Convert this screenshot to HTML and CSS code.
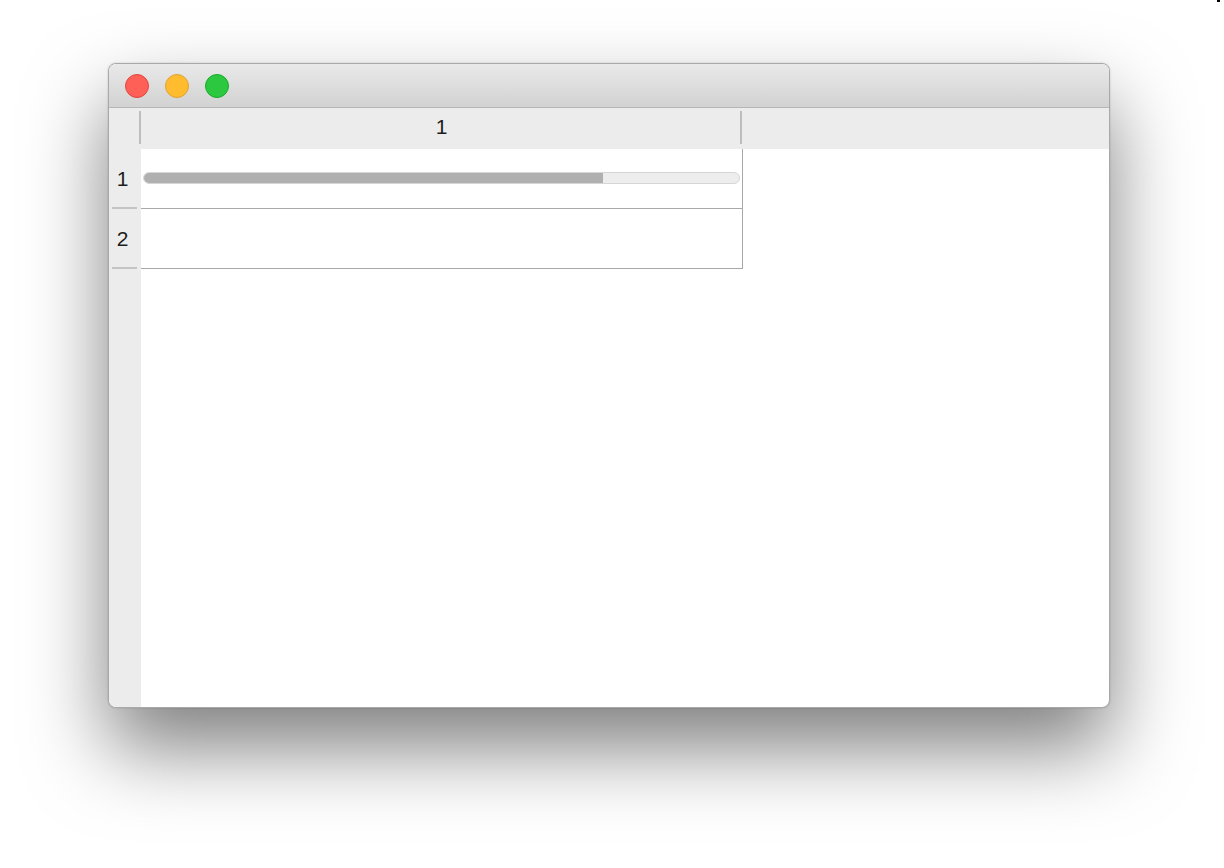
FILE: index.html
```html
<!DOCTYPE html>
<html>
<head>
<meta charset="utf-8">
<link rel="stylesheet" href="styles.css">
</head>
<body>
<div class="corner-mark"></div>
<div class="window">
  <div class="titlebar">
    <span class="light red"></span>
    <span class="light yellow"></span>
    <span class="light green"></span>
  </div>
  <div class="sheet">
    <div class="header-row">
      <div class="corner"></div>
      <div class="col-head">1</div>
      <div class="col-rest"></div>
    </div>
    <div class="body-area">
      <div class="row-heads">
        <div class="row-head">1</div>
        <div class="row-head">2</div>
      </div>
      <div class="cells">
        <div class="cell">
          <div class="progress"><div class="fill" style="width:77.2%"></div></div>
        </div>
        <div class="cell"></div>
      </div>
    </div>
  </div>
</div>
</body>
</html>
```
FILE: styles.css
```css
html, body { margin: 0; padding: 0; background: #fff; }
body {
  width: 1224px;
  height: 868px;
  padding: 63px 0 0 108px;
  box-sizing: border-box;
  font-family: "Liberation Sans", Arial, sans-serif;
  overflow: hidden;
  position: relative;
}
.corner-mark {
  position: absolute;
  right: 4px;
  top: 0;
  width: 3px;
  height: 2px;
  background: #000;
}
.window {
  width: 1002px;
  height: 645px;
  box-sizing: border-box;
  border: 1px solid #a9a9a9;
  border-radius: 8px;
  overflow: hidden;
  background: #fff;
  box-shadow: 0 40px 80px rgba(0,0,0,0.5), 0 0 2px rgba(0,0,0,0.2);
  display: flex;
  flex-direction: column;
}
.titlebar {
  height: 44px;
  flex: none;
  background: linear-gradient(#e9e9e9, #d2d2d2);
  border-bottom: 1px solid #b6b6b6;
  display: flex;
  align-items: center;
  gap: 16px;
  padding-left: 16px;
  box-sizing: border-box;
}
.light {
  width: 24px;
  height: 24px;
  border-radius: 50%;
  box-sizing: border-box;
}
.red { background: #fe5f57; border: 1px solid #e1473f; }
.yellow { background: #febc2e; border: 1px solid #dea236; }
.green { background: #2bc840; border: 1px solid #1aab29; }
.sheet {
  flex: 1;
  display: flex;
  flex-direction: column;
}
.header-row {
  height: 41px;
  flex: none;
  background: #ececec;
  display: flex;
}
.corner { width: 30px; flex: none; }
.col-head {
  width: 603px;
  flex: none;
  display: flex;
  align-items: center;
  justify-content: center;
  padding: 0 0 3px 2px;
  box-sizing: border-box;
  font-size: 21px;
  color: #1d1d1d;
  position: relative;
}
.col-head::before, .col-head::after {
  content: "";
  position: absolute;
  top: 3px;
  width: 2px;
  height: 33px;
  background: #bdbdbd;
}
.col-head::before { left: 0; }
.col-head::after { right: 0; }
.col-rest { flex: 1; }
.body-area {
  flex: 1;
  display: flex;
}
.row-heads {
  width: 32px;
  flex: none;
  background: #ececec;
}
.row-head {
  height: 60px;
  display: flex;
  align-items: center;
  justify-content: center;
  padding-right: 5px;
  box-sizing: border-box;
  font-size: 21px;
  color: #1d1d1d;
  position: relative;
}
.row-head::after {
  content: "";
  position: absolute;
  left: 3px;
  right: 4px;
  bottom: 0;
  height: 2px;
  background: #c4c4c4;
}
.cells {
  width: 601px;
  flex: none;
  align-self: flex-start;
  border-right: 1px solid #a8a8a8;
}
.cell {
  height: 60px;
  box-sizing: border-box;
  border-bottom: 1px solid #a8a8a8;
  padding: 23px 2px 0 2px;
}
.progress {
  height: 12px;
  box-sizing: border-box;
  border: 1px solid #d6d6d6;
  border-radius: 6px;
  background: #ededed;
  overflow: hidden;
}
.fill {
  height: 100%;
  background: #b0b0b0;
}
```
